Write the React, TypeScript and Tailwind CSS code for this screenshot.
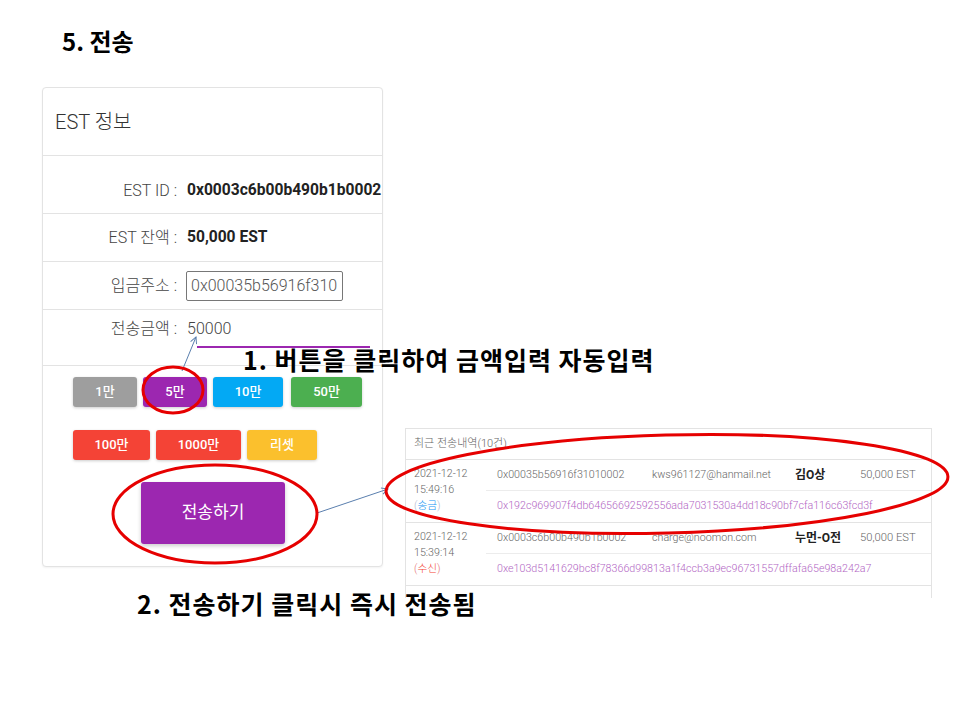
import React from "react"

const ui = { fontFamily: "Roboto, 'Noto Sans CJK KR', sans-serif" }
const note = { fontFamily: "'Noto Sans CJK KR', 'Noto Sans', sans-serif" }

type Tx = {
  date: string
  time: string
  kind: "송금" | "수신"
  addr: string
  email: string
  name: string
  amount: string
  hash: string
}

const txs: Tx[] = [
  {
    date: "2021-12-12",
    time: "15:49:16",
    kind: "송금",
    addr: "0x00035b56916f31010002",
    email: "kws961127@hanmail.net",
    name: "김O상",
    amount: "50,000 EST",
    hash: "0x192c969907f4db64656692592556ada7031530a4dd18c90bf7cfa116c63fcd3f",
  },
  {
    date: "2021-12-12",
    time: "15:39:14",
    kind: "수신",
    addr: "0x0003c6b00b490b1b0002",
    email: "charge@noomon.com",
    name: "누먼-O전",
    amount: "50,000 EST",
    hash: "0xe103d5141629bc8f78366d99813a1f4ccb3a9ec96731557dffafa65e98a242a7",
  },
]

function QuickButton({ label, className }: { label: string; className: string }) {
  return (
    <button
      type="button"
      className={`h-[30px] rounded-[3px] text-[13px] font-medium text-white shadow-[0_1px_3px_rgba(0,0,0,0.2)] ${className}`}
    >
      {label}
    </button>
  )
}

function InfoCard() {
  return (
    <div
      className="ml-[42px] h-[480px] w-[341px] shrink-0 overflow-hidden rounded-[4px] border border-[#e3e3e3] bg-white shadow-[0_1px_2px_rgba(0,0,0,0.05)]"
      style={ui}
    >
      <div className="flex h-[68px] items-center border-b border-[#e3e3e3] pl-[12px] text-[20px] font-light text-[#333]">
        EST 정보
      </div>

      <div className="flex h-[58px] items-start border-b border-[#e3e3e3] pt-[23px]">
        <div className="w-[134px] shrink-0 text-right text-[16px] font-light text-[#444]">EST ID :</div>
        <div className="ml-[10px] whitespace-nowrap text-[15.6px] font-bold text-[#222]">0x0003c6b00b490b1b0002</div>
      </div>

      <div className="flex h-[48px] items-center border-b border-[#e3e3e3]">
        <div className="w-[134px] shrink-0 text-right text-[16px] font-light text-[#444]">EST 잔액 :</div>
        <div className="ml-[10px] text-[15.6px] font-bold text-[#222]">50,000 EST</div>
      </div>

      <div className="flex h-[48px] items-center border-b border-[#e3e3e3]">
        <div className="w-[134px] shrink-0 text-right text-[16px] font-light text-[#444]">입금주소 :</div>
        <input
          readOnly
          value="0x00035b56916f31010002"
          className="ml-[9px] h-[30px] w-[157px] rounded-[2px] border border-[#777] px-[4px] text-[16px] font-light text-[#555] outline-none"
          style={ui}
        />
      </div>

      <div className="flex h-[56px] items-start border-b border-[#e3e3e3] pt-[9px]">
        <div className="w-[134px] shrink-0 text-right text-[16px] font-light leading-[20px] text-[#444]">전송금액 :</div>
        <div className="ml-[10px] flex flex-col">
          <div className="text-[16px] font-light leading-[20px] text-[#444]">50000</div>
          <div className="ml-[10px] mt-[7px] h-[2px] w-[173px] bg-[#9c27b0]" />
        </div>
      </div>

      <div className="ml-[30px] mt-[11px] flex gap-[6px]">
        <QuickButton label="1만" className="w-[64px] bg-[#9e9e9e]" />
        <QuickButton label="5만" className="w-[64px] bg-[#9c27b0]" />
        <QuickButton label="10만" className="w-[70px] bg-[#03a9f4]" />
        <QuickButton label="50만" className="ml-[2px] w-[71px] bg-[#4caf50]" />
      </div>
      <div className="ml-[30px] mt-[23px] flex gap-[6px]">
        <QuickButton label="100만" className="w-[77px] bg-[#f44336]" />
        <QuickButton label="1000만" className="w-[85px] bg-[#f44336]" />
        <QuickButton label="리셋" className="w-[70px] bg-[#fbc02d]" />
      </div>
      <div className="mt-[22px] flex pl-[98px]">
        <button
          type="button"
          className="h-[62px] w-[144px] rounded-[3px] bg-[#9c27b0] text-[17px] text-white shadow-[0_2px_4px_rgba(0,0,0,0.2)]"
        >
          전송하기
        </button>
      </div>
    </div>
  )
}

function HistoryPanel() {
  return (
    <div
      className="ml-[22px] mt-[341px] h-[170px] w-[527px] shrink-0 overflow-hidden border border-b-0 border-[#e3e3e3] bg-white font-light text-[10.7px] text-[#666]"
      style={ui}
    >
      <div className="flex h-[31px] items-center border-b border-[#e3e3e3] pl-[8px] text-[11px] text-[#666]">
        최근 전송내역(10건)
      </div>
      {txs.map((t) => (
        <div key={t.time} className="flex h-[63px] border-b border-[#e3e3e3]">
          <div className="w-[80px] shrink-0 pl-[8px] pt-[6px] leading-[16px]">
            <div>{t.date}</div>
            <div>{t.time}</div>
            <div className={t.kind === "송금" ? "text-[#b0b8d0]" : "text-[#e57373]"}>
              (<span className={t.kind === "송금" ? "text-[#2196f3]" : "text-[#f44336]"}>{t.kind}</span>)
            </div>
          </div>
          <div className="flex flex-1 flex-col">
            <div className="flex h-[31px] items-center border-b border-[#ececec] pl-[11px]">
              <div className="w-[155px] shrink-0">{t.addr}</div>
              <div className="w-[143px] shrink-0">{t.email}</div>
              <div className="w-[65px] shrink-0 text-[12px] font-bold text-[#222]">{t.name}</div>
              <div className="text-[11.2px]">{t.amount}</div>
            </div>
            <div className="flex h-[31px] items-center pl-[11px] text-[#b266c4]">{t.hash}</div>
          </div>
        </div>
      ))}
    </div>
  )
}

function Annotations() {
  return (
    <svg className="pointer-events-none absolute inset-0" width="960" height="720" viewBox="0 0 960 720">
      <defs>
        <marker id="arr" viewBox="0 0 10 10" refX="9" refY="5" markerWidth="8" markerHeight="8" orient="auto-start-reverse">
          <path d="M1 1 L9 5 L1 9" fill="none" stroke="#5a7fae" strokeWidth="1.2" />
        </marker>
      </defs>
      <line x1="182" y1="371" x2="196" y2="337" stroke="#5a7fae" strokeWidth="1" markerEnd="url(#arr)" />
      <line x1="317" y1="513" x2="388" y2="489" stroke="#5a7fae" strokeWidth="1" markerEnd="url(#arr)" />
      <ellipse cx="173" cy="390" rx="30" ry="23" fill="none" stroke="#e60000" strokeWidth="3" />
      <ellipse cx="215" cy="514" rx="102" ry="49" fill="none" stroke="#e60000" strokeWidth="3" />
      <ellipse cx="667" cy="484" rx="281" ry="49" fill="none" stroke="#e60000" strokeWidth="3" transform="rotate(-1.5 667 484)" />
    </svg>
  )
}

export default function App() {
  return (
    <div className="relative h-[720px] w-[960px] overflow-hidden bg-white">
      <div className="pl-[62px] pt-[26px] text-[24px] font-bold leading-[30px] text-black" style={note}>
        5. 전송
      </div>
      <div className="mt-[31px] flex items-start">
        <InfoCard />
        <HistoryPanel />
      </div>

      <Annotations />

      <div
        className="absolute left-[243px] top-[347px] whitespace-nowrap text-[25px] font-bold leading-none tracking-[1px] text-black"
        style={note}
      >
        1. 버튼을 클릭하여 금액입력 자동입력
      </div>
      <div
        className="absolute left-[137px] top-[591px] whitespace-nowrap text-[25px] font-bold leading-none tracking-[1px] text-black"
        style={note}
      >
        2. 전송하기 클릭시 즉시 전송됨
      </div>
    </div>
  )
}
